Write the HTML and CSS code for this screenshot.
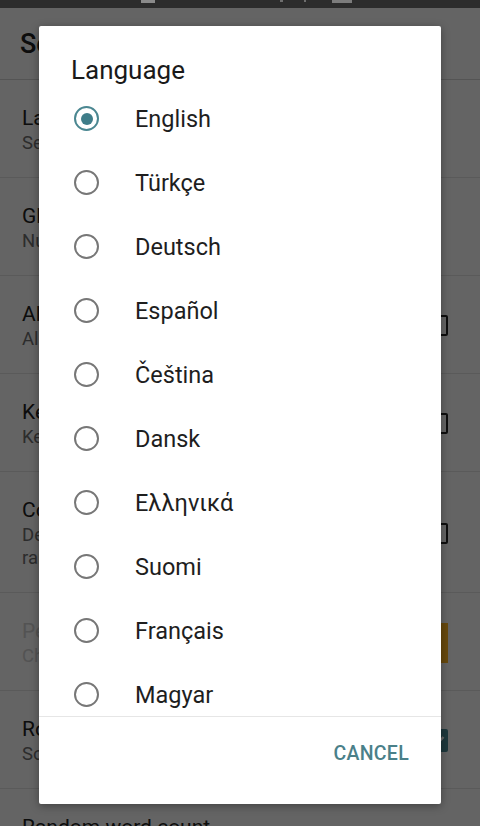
FILE: index.html
```html
<!DOCTYPE html>
<html lang="en">
<head>
<meta charset="utf-8">
<title>Settings</title>
<link rel="stylesheet" href="styles.css">
</head>
<body>
<div class="screen">
  <div class="statusbar">
    <span class="sb-icon sb-a"></span>
    <span class="sb-icon sb-b"></span>
    <span class="sb-icon sb-c"></span>
    <span class="sb-icon sb-d"></span>
  </div>
  <header class="toolbar"><h1 class="toolbar-title">Settings</h1></header>
  <div class="prefs">
    <div class="pref">
      <div class="pref-text"><div class="pref-title">Language</div><div class="pref-summary">Select the app language</div></div>
    </div>
    <div class="pref">
      <div class="pref-text"><div class="pref-title">Global word count</div><div class="pref-summary">Number of words per game</div></div>
    </div>
    <div class="pref">
      <div class="pref-text"><div class="pref-title">Allow repeats</div><div class="pref-summary">Allow the same word twice</div></div>
      <span class="checkbox"></span>
    </div>
    <div class="pref">
      <div class="pref-text"><div class="pref-title">Keep screen on</div><div class="pref-summary">Keep the screen on while playing</div></div>
      <span class="checkbox"></span>
    </div>
    <div class="pref">
      <div class="pref-text"><div class="pref-title">Countdown</div><div class="pref-summary">Deduct points for each wrong guess in random mode</div></div>
      <span class="checkbox"></span>
    </div>
    <div class="pref pref-disabled">
      <div class="pref-text"><div class="pref-title">Penalty colour</div><div class="pref-summary">Choose the penalty colour</div></div>
      <span class="swatch"></span>
    </div>
    <div class="pref">
      <div class="pref-text"><div class="pref-title">Round sounds</div><div class="pref-summary">Sound at the end of a round</div></div>
      <span class="checkbox checked"><svg viewBox="0 0 20 20" width="20" height="20"><path d="M4.5 10.5l3.5 3.5 7.5-8" fill="none" stroke="#fff" stroke-width="2.4"/></svg></span>
    </div>
    <div class="pref">
      <div class="pref-text"><div class="pref-title">Random word count</div><div class="pref-summary">Use a random number of words</div></div>
    </div>
  </div>

  <div class="scrim"></div>

  <div class="dialog" role="dialog">
    <h2 class="dialog-title">Language</h2>
    <ul class="choices">
      <li class="choice"><span class="radio checked"></span><span class="choice-label">English</span></li>
      <li class="choice"><span class="radio"></span><span class="choice-label">Türkçe</span></li>
      <li class="choice"><span class="radio"></span><span class="choice-label">Deutsch</span></li>
      <li class="choice"><span class="radio"></span><span class="choice-label">Español</span></li>
      <li class="choice"><span class="radio"></span><span class="choice-label">Čeština</span></li>
      <li class="choice"><span class="radio"></span><span class="choice-label">Dansk</span></li>
      <li class="choice"><span class="radio"></span><span class="choice-label">Ελληνικά</span></li>
      <li class="choice"><span class="radio"></span><span class="choice-label">Suomi</span></li>
      <li class="choice"><span class="radio"></span><span class="choice-label">Français</span></li>
      <li class="choice"><span class="radio"></span><span class="choice-label">Magyar</span></li>
      <li class="choice"><span class="radio"></span><span class="choice-label">Italiano</span></li>
    </ul>
    <div class="dialog-actions">
      <button class="btn-text">CANCEL</button>
    </div>
  </div>
</div>
</body>
</html>
```

FILE: styles.css
```css
* { box-sizing: border-box; }
html, body { margin: 0; padding: 0; }
body {
  width: 480px;
  height: 826px;
  overflow: hidden;
  font-family: Roboto, "Noto Sans", "Liberation Sans", sans-serif;
  background: #fafafa;
}
.screen {
  position: relative;
  width: 480px;
  height: 826px;
  overflow: hidden;
  background: #fafafa;
}
.statusbar {
  position: relative;
  z-index: 3;
  height: 8px;
  background: #2c2c2c;
  display: flex;
  align-items: flex-start;
}
.sb-icon { display: block; height: 2px; background: #6e6e6e; }
.sb-a { margin-left: 141px; width: 14px; height: 3px; background: #8a8a8a; }
.sb-b { margin-left: 125px; width: 3px; }
.sb-c { margin-left: 21px; width: 2px; }
.sb-d { margin-left: 26px; width: 20px; height: 3px; background: #7c7c7c; }

.toolbar {
  height: 72px;
  background: #fafafa;
  border-bottom: 1px solid #d2d2d2;
  display: flex;
  align-items: center;
  padding-left: 20px;
}
.toolbar-title {
  margin: 0;
  font-size: 27px;
  font-weight: 500;
  color: #212121;
}
.prefs { display: flex; flex-direction: column; }
.pref {
  display: flex;
  align-items: center;
  padding: 24px 32px 22px 22px;
  border-bottom: 1px solid #e0e0e0;
}
.pref-text { flex: 1; min-width: 0; padding-right: 24px; }
.pref-title { font-size: 21px; line-height: 28px; color: #212121; }
.pref-summary { font-size: 18.5px; line-height: 23px; color: #6f6f6f; }
.pref-disabled .pref-title,
.pref-disabled .pref-summary { color: #d0d0d0; }
.checkbox {
  width: 20px;
  height: 21px;
  border: 2.5px solid #212121;
  border-radius: 2px;
  flex: none;
}
.checkbox.checked {
  background: #4a8a96;
  border-color: #4a8a96;
  display: flex;
  align-items: center;
  justify-content: center;
  width: 21px;
  height: 23px;
  border-width: 0;
}
.swatch {
  width: 40px;
  height: 40px;
  background: #ffb422;
  flex: none;
}

.scrim {
  position: absolute;
  inset: 0;
  background: rgba(0, 0, 0, 0.6);
  z-index: 2;
}

.dialog {
  position: absolute;
  z-index: 4;
  left: 39px;
  top: 26px;
  width: 402px;
  height: 778px;
  background: #fff;
  border-radius: 2px;
  box-shadow: 0 2px 8px rgba(0, 0, 0, 0.35);
  display: flex;
  flex-direction: column;
}
.dialog-title {
  margin: 0;
  padding: 28px 0 0 32px;
  font-size: 26px;
  line-height: 32px;
  font-weight: 400;
  color: #1a1a1a;
}
.choices {
  list-style: none;
  margin: 0;
  padding: 0;
  height: 631px;
  overflow: hidden;
  flex: none;
  border-bottom: 1px solid #e6e6e6;
}
.choice {
  height: 64px;
  display: flex;
  align-items: center;
  padding-left: 35px;
  padding-top: 1px;
}
.radio {
  width: 25px;
  height: 25px;
  border: 2.5px solid #777;
  border-radius: 50%;
  flex: none;
  display: flex;
  align-items: center;
  justify-content: center;
}
.radio.checked { border-color: #4b8791; }
.radio.checked::after {
  content: "";
  width: 12px;
  height: 12px;
  border-radius: 50%;
  background: #3f7d89;
}
.choice-label {
  margin-left: 36px;
  font-size: 23.5px;
  color: #1e1e1e;
}
.dialog-actions {
  flex: 1;
  display: flex;
  justify-content: flex-end;
  align-items: flex-start;
  padding: 23px 32px 0 0;
}
.btn-text {
  border: 0;
  background: none;
  padding: 0;
  font-family: Roboto, "Noto Sans", "Liberation Sans", sans-serif;
  font-size: 19.5px;
  line-height: 28px;
  font-weight: 500;
  letter-spacing: 0.3px;
  color: #4a8089;
}
```
